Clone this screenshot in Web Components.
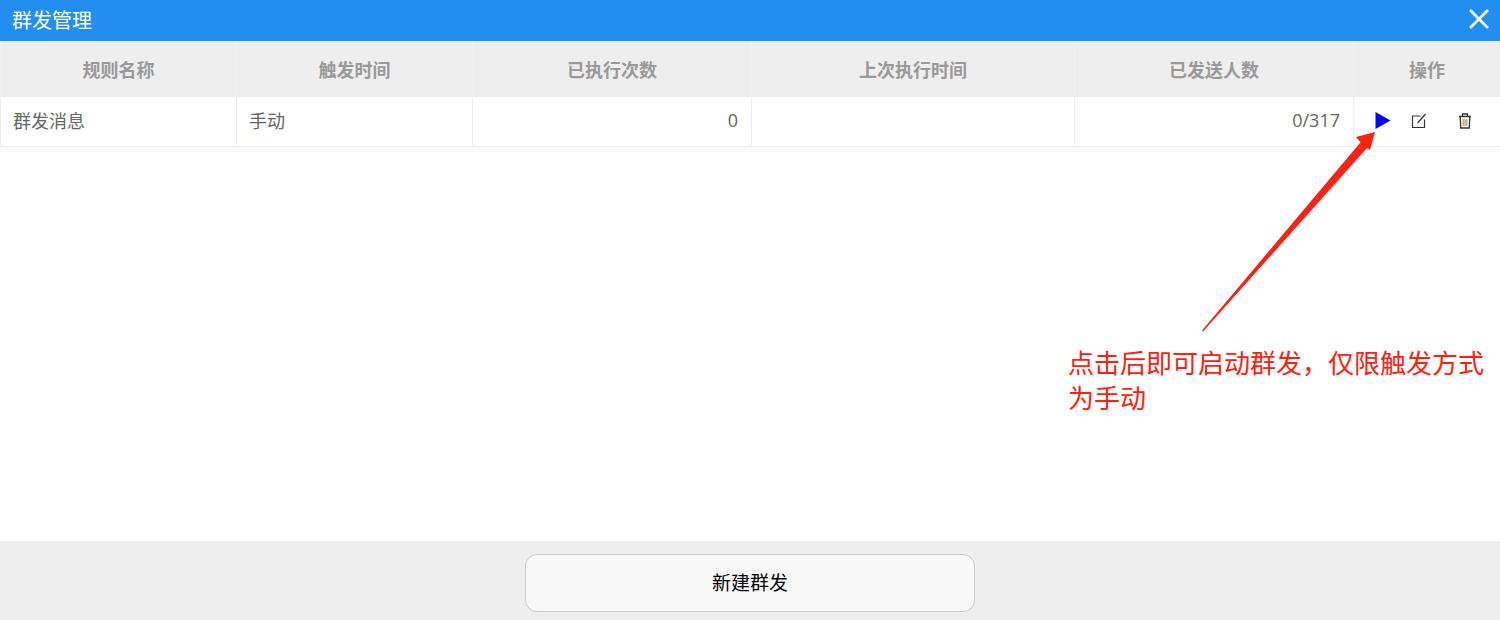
<!DOCTYPE html>
<html lang="zh">
<head>
<meta charset="utf-8">
<title>群发管理</title>
<style>
html, body { margin: 0; height: 100%; background: #fff; }
body { font-family: "Noto Sans CJK SC", "Liberation Sans", sans-serif; overflow: hidden; }
</style>
</head>
<body>
<mass-dialog heading="群发管理">
    <mass-table></mass-table>
    <mass-note slot="over">点击后即可启动群发，仅限触发方式为手动</mass-note>
    <mass-button slot="footer">新建群发</mass-button>
</mass-dialog>

<script>
var COLS = '236px 236px 279px 323px 279px 147px';

class MassDialog extends HTMLElement{
    constructor(){
        super();
        this.shadow = this.attachShadow({mode: 'open'});
    }

    connectedCallback(){
        this.shadow.innerHTML = `
        <style>
            :host { display: flex; flex-direction: column; height: 620px; position: relative; }
            .title {
                height: 41px;
                flex: none;
                background: #238ef2;
                color: #fff;
                font-size: 20px;
                line-height: 40px;
                padding: 0 12px;
                display: flex;
                justify-content: space-between;
            }
            .close { width: 22px; height: 22px; margin: 8px -2px 0 0; }
            .body { flex: 1; }
            .foot {
                height: 79px;
                flex: none;
                background: #eeeeee;
                display: flex;
                justify-content: center;
                padding-top: 13px;
                box-sizing: border-box;
            }
        </style>
        <div class="title">
            <span>${this.getAttribute('heading')}</span>
            <svg class="close" viewBox="0 0 22 22"><path d="M2 2 L20 20 M20 2 L2 20" stroke="#fff" stroke-width="2.6" fill="none"/></svg>
        </div>
        <div class="body"><slot></slot></div>
        <div class="foot"><slot name="footer"></slot></div>
        <slot name="over"></slot>`;
    }
}

class MassTable extends HTMLElement{
    constructor(){
        super();
        this.shadow = this.attachShadow({mode: 'open'});
    }

    connectedCallback(){
        var heads = ['规则名称', '触发时间', '已执行次数', '上次执行时间', '已发送人数', '操作'];
        var template = `
        <style>
            :host { display: block; }
            .row { display: grid; grid-template-columns: ${COLS}; }
            .head { height: 56px; background: #eeeeee; }
            .head div {
                color: #999999;
                font-size: 18px;
                font-weight: 700;
                line-height: 57px;
                text-align: center;
                border-left: 1px solid #f1f1f1;
                box-sizing: border-box;
            }
            .data { height: 50px; border-bottom: 1px solid #edecf6; box-sizing: border-box; }
            .data > div {
                color: #666666;
                font-size: 18px;
                line-height: 47px;
                padding: 0 12px;
                border-left: 1px solid #edecf6;
                box-sizing: border-box;
            }
            .data .num { text-align: right; padding-right: 13px; font-family: "Open Sans", "Noto Sans CJK SC", sans-serif; }
            .data .ops { display: flex; align-items: center; padding: 0 0 2px 21px; gap: 20px; }
            svg { display: block; flex: none; }
        </style>
        <div class="row head">${heads.map(function(h){ return '<div>' + h + '</div>'; }).join('')}</div>
        <div class="row data">
            <div>群发消息</div>
            <div>手动</div>
            <div class="num">0</div>
            <div></div>
            <div class="num">0/317</div>
            <div class="ops">
                <svg width="16" height="17" viewBox="0 0 16 17"><path d="M0.5 0 L15.5 8.5 L0.5 17 Z" fill="#0000ff"/></svg>
                <svg width="16" height="16" viewBox="0 0 16 16" fill="none" stroke="#333" stroke-width="1.2"><path d="M9.5 3 H1.5 V14.5 H13.5 V6.5"/><path d="M6.5 10 L14.5 1"/></svg>
                <svg width="16" height="16" viewBox="0 0 16 16" fill="none" stroke="#333" stroke-width="1.3" style="margin-left:10px"><path d="M2 3.5 H14 M5.5 3.5 V1 H10.5 V3.5"/><path d="M3.2 3.5 L3.7 15 H12.3 L12.8 3.5"/><path d="M6.2 6 V13" stroke="#d99a4a"/><path d="M8 6 V13" stroke="#d99a4a"/><path d="M9.8 6 V13" stroke="#7fa8d0"/></svg>
            </div>
        </div>`;
        this.shadow.innerHTML = template;
    }
}

class MassNote extends HTMLElement{
    constructor(){
        super();
        this.shadow = this.attachShadow({mode: 'open'});
    }

    connectedCallback(){
        // arrow and caption are drawn over the table, like a pasted annotation
        this.shadow.innerHTML = `
        <style>
            :host { display: block; }
            svg { position: absolute; left: 1190px; top: 120px; }
            .text {
                position: absolute;
                left: 1068px;
                top: 344px;
                width: 420px;
                color: #ff2111;
                font-size: 26px;
                line-height: 35px;
            }
        </style>
        <svg width="200" height="220" viewBox="0 0 200 220"><path d="M12 210.5 L170.6 22.2 L166 17 L185 12 L180 30 L177.2 27.8 L13 211.5 Z" fill="#ff2111"/></svg>
        <div class="text"><slot></slot></div>`;
    }
}

class MassButton extends HTMLElement{
    constructor(){
        super();
        this.shadow = this.attachShadow({mode: 'open'});
    }

    connectedCallback(){
        this.shadow.innerHTML = `
        <style>
            :host {
                display: flex;
                align-items: center;
                justify-content: center;
                width: 450px;
                height: 58px;
                box-sizing: border-box;
                background: #f8f8f8;
                border: 1px solid #cccccc;
                border-radius: 12px;
                color: #000;
                font-size: 19px;
                padding-bottom: 3px;
            }
        </style>
        <slot></slot>`;
    }
}

window.customElements.define('mass-dialog', MassDialog);
window.customElements.define('mass-table', MassTable);
window.customElements.define('mass-note', MassNote);
window.customElements.define('mass-button', MassButton);
</script>
</body>
</html>
